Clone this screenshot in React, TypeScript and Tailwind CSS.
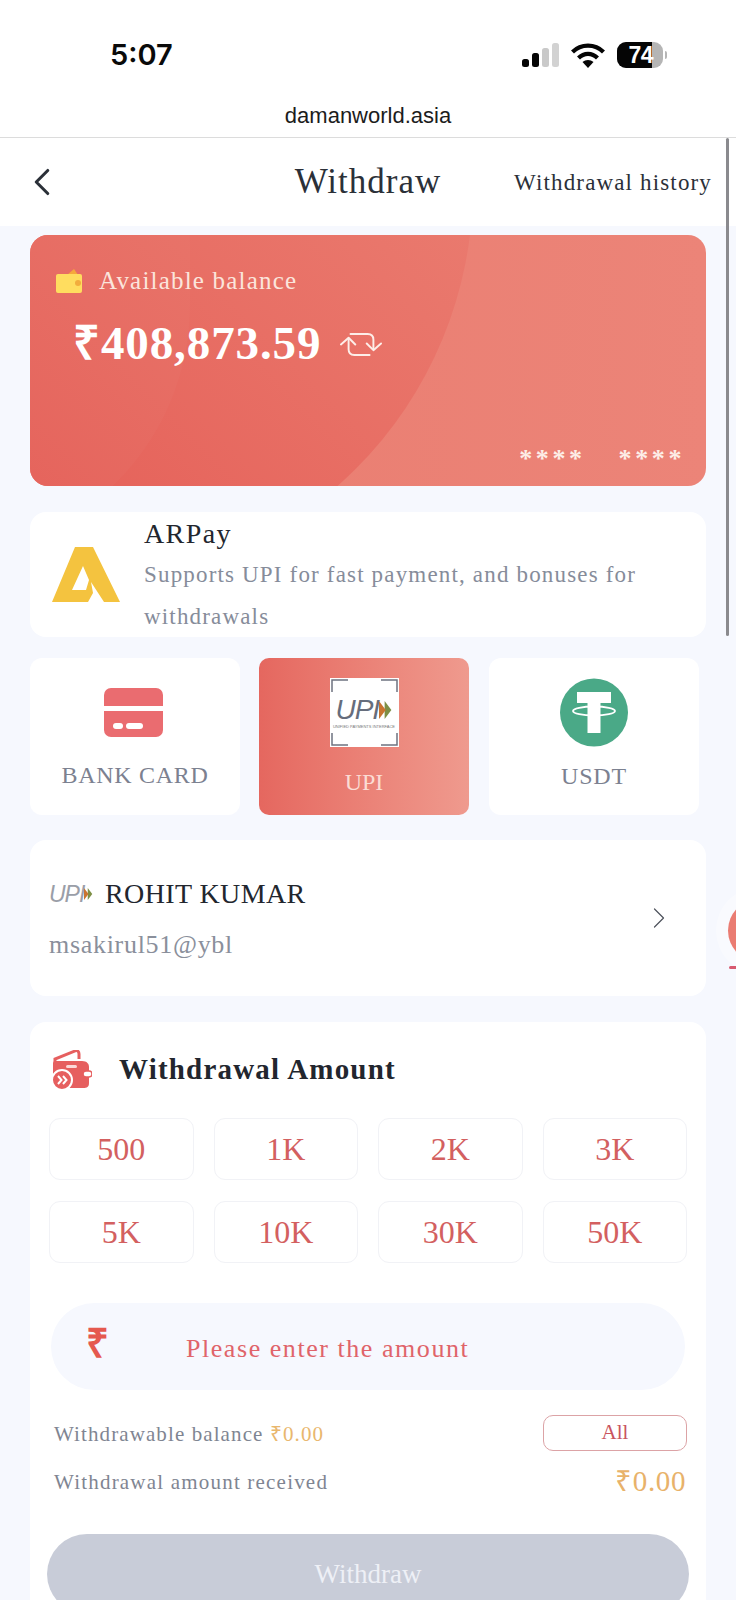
import { ChevronLeft, ChevronRight } from 'lucide-react';

const amounts = ['500', '1K', '2K', '3K', '5K', '10K', '30K', '50K'];

const StatusIcons = () => (
  <div className="flex items-center gap-[12px]">
    <svg width="37" height="24" viewBox="0 0 37 24">
      <rect x="0" y="16" width="7" height="8" rx="2.5" fill="#050505" />
      <rect x="10" y="10" width="7" height="14" rx="2.5" fill="#050505" />
      <rect x="20" y="5" width="7" height="19" rx="2.5" fill="#c9c9c9" />
      <rect x="30" y="0" width="7" height="24" rx="2.5" fill="#d2d2d2" />
    </svg>
    <svg width="34" height="25" viewBox="0 0 34 25">
      <path d="M1.5 9 C10 0.5 24 0.5 32.5 9" fill="none" stroke="#050505" strokeWidth="4.2" />
      <path d="M7.5 15 C13 9.5 21 9.5 26.5 15" fill="none" stroke="#050505" strokeWidth="4.2" />
      <path d="M17 25 L11.5 19 C14.5 16.3 19.5 16.3 22.5 19 Z" fill="#050505" />
    </svg>
    <div className="flex items-center">
      <div className="flex h-[26px] w-[46px] overflow-hidden rounded-[9px] bg-[#b5b5b5]">
        <div className="flex w-[35px] items-center justify-end bg-[#050505] font-['Liberation_Sans',sans-serif] text-[23px] font-bold text-white">
          <span className="-mr-[1px] tracking-[-0.5px]">74</span>
        </div>
      </div>
      <div className="ml-[2px] h-[8px] w-[2px] rounded-r-full bg-[#b5b5b5]" />
    </div>
  </div>
);

const WalletIcon = () => (
  <svg width="26" height="24" viewBox="0 0 26 24">
    <path d="M11 6 L18 0 L22 6 Z" fill="#f5a93c" />
    <rect x="0" y="5" width="26" height="19" rx="2" fill="#ffdd5f" />
    <circle cx="22" cy="14" r="3" fill="#f2ad3d" />
  </svg>
);

const RefreshIcon = () => (
  <svg width="42" height="27" viewBox="0 0 44 28" fill="none" stroke="#fdeee9" strokeWidth="2" strokeLinecap="round" strokeLinejoin="round">
    <path d="M1 15 L9 8 L16 15" />
    <path d="M9 9 V20 C9 24 11 26 15 26 H31" />
    <path d="M11 4 H29 C33 4 35 6 35 10 V20" />
    <path d="M28 14 L35 21 L43 14" />
  </svg>
);

const ArPayLogo = () => (
  <svg width="68" height="55" viewBox="0 0 68 55">
    <path
      fillRule="evenodd"
      fill="#f4c33f"
      d="M0 55 L23 0 H41 L68 55 H52 L39 35 L41 46 L36 55 Z M31 19 L20 43 H34 L37 33 Z"
    />
  </svg>
);

const BankCardIcon = () => (
  <div className="-ml-[3px] flex h-[49px] w-[59px] flex-col gap-[5px]">
    <div className="h-[18px] rounded-t-[7px] bg-[#ea6c70]" />
    <div className="flex h-[26px] items-center gap-[3px] rounded-b-[7px] bg-[#ea6c70] px-[9px] pt-[4px]">
      <div className="h-[6px] w-[10px] rounded-full bg-white" />
      <div className="h-[6px] w-[17px] rounded-full bg-white" />
    </div>
  </div>
);

// small orange and green chevrons that close the UPI mark
const UpiArrows = ({ h }: { h: number }) => (
  <svg width={h * 0.75} height={h} viewBox="0 0 12 16">
    <path d="M5 0 L11 8 L5 16 Z" fill="#7d8f45" />
    <path d="M0 0 L6 8 L0 16 Z" fill="#c9742f" />
  </svg>
);

const UpiTile = () => (
  <div className="relative flex h-[69px] w-[69px] flex-col items-center justify-center bg-white">
    <svg className="absolute inset-0" width="69" height="69" viewBox="0 0 69 69" fill="none" stroke="#6d7380" strokeWidth="1.5">
      <path d="M2 14 V2 H18" />
      <path d="M51 2 H67 V14" />
      <path d="M2 55 V67 H18" />
      <path d="M51 67 H67 V55" />
    </svg>
    <div className="flex items-center">
      <span className="font-['Liberation_Sans',sans-serif] text-[28px] leading-[26px] tracking-[-1px] text-[#666d7c] italic">UPI</span>
      <UpiArrows h={18} />
    </div>
    <span className="mt-[1px] font-['Liberation_Sans',sans-serif] text-[4px] leading-[5px] whitespace-nowrap text-[#777]">UNIFIED PAYMENTS INTERFACE</span>
  </div>
);

const TetherIcon = () => (
  <svg width="68" height="69" viewBox="0 0 68 69">
    <circle cx="34" cy="34.5" r="34" fill="#4aa987" />
    <ellipse cx="34" cy="33" rx="21" ry="4.5" fill="none" stroke="#fff" strokeWidth="1.8" />
    <path d="M17 14 H51 V25 H40.5 V55 H27.5 V25 H17 Z" fill="#fff" />
  </svg>
);

const AmountIcon = () => (
  <svg width="41" height="40" viewBox="0 0 41 40">
    <path d="M4 13 L4 9 L24 1 C26 0 28 1 28 4 V9" fill="none" stroke="#e65f5f" strokeWidth="3" />
    <path d="M3 11 H31 C36 11 38 14 38 17 V33 C38 37 36 38 32 38 H8 C4 38 2 36 2 32 V13 Z" fill="#e65f5f" />
    <rect x="15" y="15" width="11" height="3" rx="1.5" fill="#fbd9d8" />
    <rect x="32" y="21" width="9" height="6" rx="3" fill="#fff" stroke="#e65f5f" strokeWidth="1.5" />
    <circle cx="11" cy="30" r="10" fill="#e65f5f" stroke="#fff" strokeWidth="2" />
    <path d="M7 26 L10.5 30 L7 34 M12 26 L15.5 30 L12 34" fill="none" stroke="#fff" strokeWidth="2" />
  </svg>
);

const App = () => {
  return (
    <div className="relative h-[1600px] w-[736px] overflow-hidden bg-[#f6f8fe] font-['Liberation_Serif',serif]">
      <div className="h-[138px] border-b border-[#dcdcdc] bg-white">
        <div className="flex items-center justify-between pt-[41px] pr-[69px] pl-[110px]">
          <span className="font-['Inter',sans-serif] text-[29px] leading-[28px] font-semibold text-[#0a0a0a]">5:07</span>
          <StatusIcons />
        </div>
        <div className="mt-[34px] text-center font-['Liberation_Sans',sans-serif] text-[22px] leading-[26px] text-[#1c1c1c]">damanworld.asia</div>
      </div>

      <header className="relative flex h-[88px] items-center bg-white pr-[24px] pl-[22px] text-[#2b3038]">
        <ChevronLeft size={46} strokeWidth={1.6} className="-ml-[3px] -mt-[1px]" />
        <h1 className="absolute inset-x-0 text-center text-[35px] tracking-[1px]">Withdraw</h1>
        <span className="ml-auto mt-[2px] text-[23px] tracking-[1.15px]">Withdrawal history</span>
      </header>

      <main className="px-[30px] pt-[9px]">
        <section className="relative h-[251px] overflow-hidden rounded-[18px] bg-gradient-to-r from-[#e97c6f] to-[#ec8478]">
          <div className="absolute top-[-449px] left-[-357px] h-[800px] w-[800px] rounded-full bg-gradient-to-tr from-[#e2504c] to-[#ec887b]" />
          <div className="absolute top-[-240px] left-[-340px] h-[560px] w-[500px] rounded-full bg-white/[0.025]" />
          <div className="relative flex items-center gap-[17px] pt-[33px] pl-[26px]">
            <WalletIcon />
            <span className="text-[25px] leading-[26px] tracking-[1.2px] text-[#fbe5dc]">Available balance</span>
          </div>
          <div className="relative mt-[23px] flex items-center pl-[43px] text-white">
            <span className="text-[47px] leading-[52px] font-bold tracking-[0.9px]">₹408,873.59</span>
            <div className="ml-[19px]">
              <RefreshIcon />
            </div>
          </div>
          <div className="absolute right-[21px] bottom-[13px] flex gap-[33px] text-[26px] leading-[28px] font-bold tracking-[3.6px] text-[#fdeee8]">
            <span>****</span>
            <span>****</span>
          </div>
        </section>

        <section className="mt-[26px] flex h-[125px] items-center rounded-[16px] bg-white pl-[22px]">
          <ArPayLogo />
          <div className="ml-[24px] mt-[3px]">
            <div className="-mt-[1px] text-[28px] leading-[40px] tracking-[1.4px] text-[#22262e]">ARPay</div>
            <p className="w-[520px] text-[23px] leading-[42px] tracking-[1.17px] text-[#868c9a]">
              Supports UPI for fast payment, and bonuses for withdrawals
            </p>
          </div>
        </section>

        <section className="mt-[21px] flex gap-[19px]">
          <div className="flex h-[157px] w-[210px] flex-col items-center rounded-[12px] bg-white pt-[30px]">
            <BankCardIcon />
            <span className="mt-[24px] text-[24px] leading-[28px] tracking-[0.7px] text-[#7c8190]">BANK CARD</span>
          </div>
          <div className="flex h-[157px] w-[210px] flex-col items-center rounded-[10px] bg-gradient-to-r from-[#e5675f] to-[#ef9a8e] pt-[20px]">
            <UpiTile />
            <span className="mt-[21px] text-[24px] leading-[28px] text-[#fbdcd4]">UPI</span>
          </div>
          <div className="ml-[1px] flex h-[157px] w-[210px] flex-col items-center rounded-[12px] bg-white pt-[20px]">
            <TetherIcon />
            <span className="mt-[15px] text-[24px] leading-[28px] tracking-[0.8px] text-[#7c8190]">USDT</span>
          </div>
        </section>

        <section className="mt-[25px] flex h-[156px] items-center rounded-[16px] bg-white pr-[29px] pl-[19px]">
          <div>
            <div className="flex items-center">
              <div className="flex w-[56px] items-center">
                <span className="font-['Liberation_Sans',sans-serif] text-[23px] leading-[24px] tracking-[-1px] text-[#9a9ea8] italic">UPI</span>
                <UpiArrows h={12} />
              </div>
              <span className="text-[28px] leading-[34px] tracking-[0.4px] text-[#22262e]">ROHIT KUMAR</span>
            </div>
            <div className="mt-[20px] text-[26px] leading-[28px] tracking-[0.7px] text-[#8a8f9b]">msakirul51@ybl</div>
          </div>
          <ChevronRight size={36} strokeWidth={0.8} className="ml-auto text-[#4d525c]" />
        </section>

        <section className="mt-[26px] h-[600px] rounded-[16px] bg-white px-[19px] pt-[28px]">
          <div className="flex items-center pl-[2px]">
            <AmountIcon />
            <h2 className="-mt-[2px] ml-[27px] text-[29px] leading-[36px] font-bold tracking-[1.2px] text-[#22262e]">Withdrawal Amount</h2>
          </div>

          <div className="mt-[28px] grid grid-cols-4 gap-x-[20px] gap-y-[21px]">
            {amounts.map((amount) => (
              <button key={amount} className="flex h-[62px] items-center justify-center rounded-[11px] border border-[#f1f2f6] bg-white text-[32px] text-[#d36060]">
                {amount}
              </button>
            ))}
          </div>

          <div className="mx-[2px] mt-[40px] flex h-[87px] items-center rounded-full bg-[#f6f8fe] pl-[35px]">
            <span className="-mt-[6px] w-[100px] text-[40px] leading-[40px] font-bold text-[#e5594f]">₹</span>
            <span className="mt-[3px] text-[26px] tracking-[1.55px] text-[#e0646a]">Please enter the amount</span>
          </div>

          <div className="mt-[25px] flex items-center justify-between pl-[5px]">
            <span className="mt-[3px] text-[21px] tracking-[1.1px] text-[#7f8592]">
              Withdrawable balance <span className="text-[#e9b76e]">₹0.00</span>
            </span>
            <button className="h-[36px] w-[144px] rounded-[10px] border border-[#dca3a6] text-[21px] text-[#c9545e]">All</button>
          </div>
          <div className="mt-[11px] flex items-center justify-between pl-[5px]">
            <span className="mt-[3px] text-[21px] tracking-[1.2px] text-[#7f8592]">Withdrawal amount received</span>
            <span className="mr-[1px] -mt-[1px] text-[29px] leading-[40px] tracking-[0.6px] text-[#e8b26a]">₹0.00</span>
          </div>

          <button className="-ml-[2px] mt-[33px] h-[80px] w-[642px] rounded-full bg-[#c8ccd8] text-[27px] text-[#eef0f6]">Withdraw</button>
        </section>
      </main>

      {/* page scrollbar */}
      <div className="absolute top-[138px] right-[7px] h-[498px] w-[3px] rounded-full bg-[#8a8a8e]" />
      {/* floating support button, mostly off the right edge */}
      <div className="absolute top-[899px] left-[728px] h-[63px] w-[63px] rounded-full bg-[#ea7c72] shadow-[0_0_0_12px_rgba(255,255,255,0.35)]" />
      <div className="absolute top-[966px] left-[729px] h-[3px] w-[7px] rounded-l-full bg-[#d85a70]" />
    </div>
  );
};

export default App;
